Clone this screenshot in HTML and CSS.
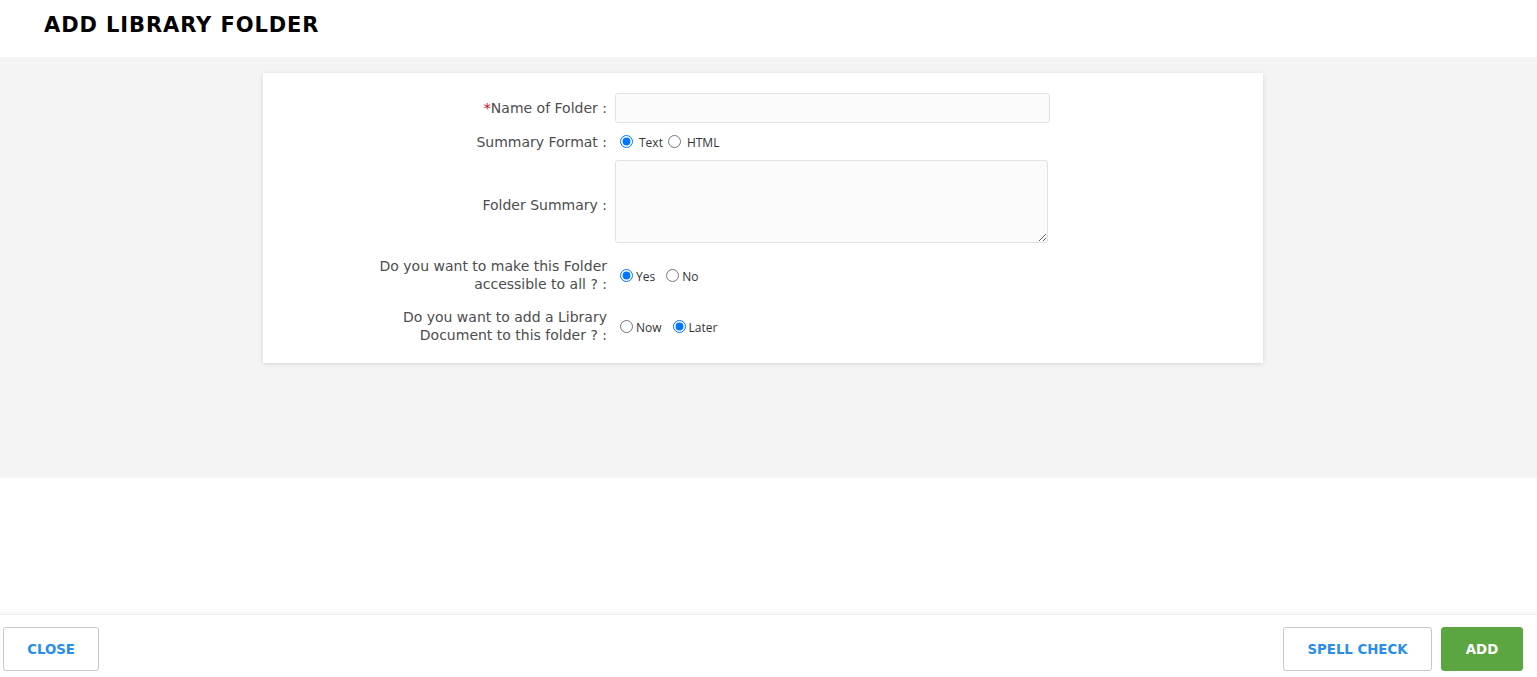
FILE: index.html
```html
<!DOCTYPE html>
<html>
<head>
<meta charset="utf-8">
<link rel="stylesheet" href="styles.css">
</head>
<body>
<div class="page">
  <header class="header"><h1 class="title">ADD LIBRARY FOLDER</h1></header>
  <main class="content">
    <div class="card">
      <div class="row r1">
        <label class="lbl"><span class="req">*</span>Name of Folder :</label>
        <div class="field"><input class="txt" type="text"></div>
      </div>
      <div class="row r2">
        <label class="lbl">Summary Format :</label>
        <div class="field radios">
          <input type="radio" name="fmt" checked><span class="opt pre">Text</span>
          <input type="radio" name="fmt"><span class="opt pre">HTML</span>
        </div>
      </div>
      <div class="row r3">
        <label class="lbl low">Folder Summary :</label>
        <div class="field"><textarea class="area"></textarea></div>
      </div>
      <div class="row r4">
        <label class="lbl">Do you want to make this Folder<br>accessible to all ? :</label>
        <div class="field radios">
          <input type="radio" name="acc" checked><span class="opt sp">Yes</span>
          <input type="radio" name="acc"><span class="opt">No</span>
        </div>
      </div>
      <div class="row r5">
        <label class="lbl">Do you want to add a Library<br>Document to this folder ? :</label>
        <div class="field radios">
          <input type="radio" name="doc"><span class="opt sp">Now</span>
          <input type="radio" name="doc" checked><span class="opt">Later</span>
        </div>
      </div>
    </div>
  </main>
  <div class="spacer"></div>
  <footer class="footer">
    <button class="btn btn-outline">CLOSE</button>
    <div class="right">
      <button class="btn btn-outline btn-spell">SPELL CHECK</button>
      <button class="btn btn-add">ADD</button>
    </div>
  </footer>
</div>
</body>
</html>
```
FILE: styles.css
```css
* { box-sizing: border-box; }
html, body { margin: 0; padding: 0; background: #fff; }
body { font-family: "DejaVu Sans", sans-serif; color: #444; }
.page { width: 1537px; height: 677px; display: flex; flex-direction: column; overflow: hidden; }
.header { height: 57px; padding: 0 0 0 44px; display: flex; align-items: center; background: #fff; }
.title { margin: 0; font-size: 21px; font-weight: bold; color: #000; letter-spacing: 0.9px; padding-bottom: 7px; }
.content { background: #f4f4f4; height: 421px; padding-top: 16px; }
.card { width: 1000px; margin-left: 263px; background: #fff; padding: 20px 0 19px; box-shadow: 0 1px 5px rgba(0,0,0,0.12); }
.row { display: flex; align-items: center; }
.lbl { width: 344px; text-align: right; font-size: 14px; line-height: 18px; color: #4d4d4d; flex: none; }
.lbl.low { padding-top: 6px; }
.req { color: #d0021b; }
.field { margin-left: 8px; display: flex; align-items: center; }
.r1 { height: 30px; }
.r2 { height: 27px; margin-top: 5px; }
.r3 { height: 83px; margin-top: 5px; }
.r4 { height: 36px; margin-top: 14px; }
.r5 { height: 36px; margin-top: 15px; }
.txt { width: 435px; height: 30px; border: 1px solid #e2e2e2; border-radius: 3px; background: #fbfbfb; margin: 0; }
.area { width: 433px; height: 83px; border: 1px solid #e2e2e2; border-radius: 3px; background: #fbfbfb; margin: 0; display: block; resize: both; }
.radios input { width: 13px; height: 13px; margin: 0 3px 0 5px; accent-color: #0075ff; }
.opt { font-family: "Open Sans", sans-serif; font-size: 12px; color: #333; padding-top: 2px; }
.opt.pre { margin-left: 3px; }
.opt.sp { margin-right: 6px; }
.spacer { flex: 1; }
.footer { height: 63px; border-top: 1px solid #eee; box-shadow: 0 -2px 4px rgba(0,0,0,0.04); display: flex; justify-content: space-between; align-items: flex-start; padding: 12px 14px 0 3px; }
.right { display: flex; gap: 9px; }
.btn { height: 44px; font-family: "DejaVu Sans", sans-serif; font-weight: bold; font-size: 13.3px; border-radius: 3px; cursor: pointer; }
.btn-outline { background: #fff; border: 1px solid #c8c8c8; color: #2a8ee8; width: 96px; }
.btn-spell { width: 149px; }
.btn-add { width: 82px; background: #5ca642; border: 1px solid #5ca642; color: #fff; }
```
